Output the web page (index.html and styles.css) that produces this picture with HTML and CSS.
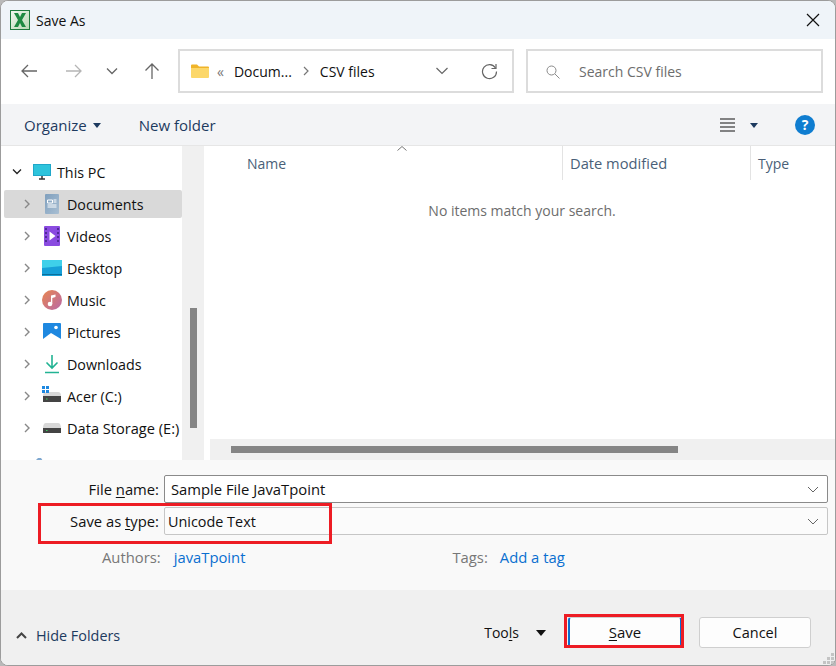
FILE: index.html
```html
<!DOCTYPE html>
<html>
<head>
  <title>Save As</title>
  <link rel="stylesheet" href="styles.css">
</head>
<body>
<div class="window">

  <div class="titlebar">
    <svg class="app-icon" width="20" height="20" viewBox="0 0 20 20">
      <defs>
        <linearGradient id="xl" x1="0" y1="0" x2="1" y2="1"><stop offset="0" stop-color="#f2f7f0"/><stop offset="1" stop-color="#b9d8b4"/></linearGradient>
        <linearGradient id="music" x1="0" y1="0" x2="1" y2="1"><stop offset="0" stop-color="#e8864f"/><stop offset="1" stop-color="#b968a8"/></linearGradient>
        <linearGradient id="docs" x1="0" y1="0" x2="1" y2="1"><stop offset="0" stop-color="#7f9fbd"/><stop offset="1" stop-color="#a9bfd3"/></linearGradient>
      </defs>
      <rect x="0.5" y="0.5" width="19" height="19" fill="url(#xl)" stroke="#1f7a3d"/>
      <path d="M4 3h4l2 4 2-4h4l-4 7 4 7h-4l-2-4-2 4H4l4-7z" fill="#1f8a42"/>
    </svg>
    <span class="title">Save As</span>
    <svg class="close" width="14" height="14" viewBox="0 0 14 14"><path d="M1 1l12 12M13 1L1 13" stroke="#111" stroke-width="1.2" fill="none"/></svg>
  </div>

  <div class="navbar">
    <svg class="nav-btn" width="18" height="16" viewBox="0 0 18 16"><path d="M17 8H2M8 2L2 8l6 6" stroke="#666" stroke-width="1.3" fill="none"/></svg>
    <svg class="nav-btn fwd" width="18" height="16" viewBox="0 0 18 16"><path d="M1 8h15M10 2l6 6-6 6" stroke="#b5b5b5" stroke-width="1.3" fill="none"/></svg>
    <svg class="nav-btn down" width="12" height="8" viewBox="0 0 12 8"><path d="M1 1.500l5 5 5-5" stroke="#666" stroke-width="1.3" fill="none"/></svg>
    <svg class="nav-btn up" width="16" height="18" viewBox="0 0 16 18"><path d="M8 17V2M1.500 8.500L8 2l6.500 6.500" stroke="#666" stroke-width="1.3" fill="none"/></svg>

    <div class="address">
      <svg width="18" height="14" viewBox="0 0 18 14"><path d="M0 1.500A1 1 0 0 1 1 .5h5l2 2h9a1 1 0 0 1 1 1V4H0z" fill="#f0b429"/><path d="M0 4h18v9a1 1 0 0 1-1 1H1a1 1 0 0 1-1-1z" fill="#fcd769"/></svg>
      <span class="crumb-more">«</span>
      <span class="crumb">Docum...</span>
      <svg class="crumb-sep" width="6" height="10" viewBox="0 0 6 10"><path d="M1 1l4 4-4 4" stroke="#777" stroke-width="1.2" fill="none"/></svg>
      <span class="crumb">CSV files</span>
      <svg class="addr-down" width="12" height="8" viewBox="0 0 12 8"><path d="M.5 1l5.500 5.500L11.500 1" stroke="#666" stroke-width="1.2" fill="none"/></svg>
      <svg class="refresh" width="17" height="17" viewBox="0 0 17 17"><path d="M14.500 5A7 7 0 1 0 15.500 8.500" stroke="#666" stroke-width="1.2" fill="none"/><path d="M10.500 5.500h4.500V1" stroke="#666" stroke-width="1.2" fill="none"/></svg>
    </div>

    <div class="search">
      <svg width="14" height="14" viewBox="0 0 14 14"><circle cx="5.500" cy="5.500" r="4.500" stroke="#8a8a8a" fill="none"/><path d="M9 9l4.500 4.500" stroke="#8a8a8a" fill="none"/></svg>
      <span>Search CSV files</span>
    </div>
  </div>

  <div class="toolbar">
    <span class="tool-label">Organize</span>
    <span class="caret"></span>
    <span class="tool-label new-folder">New folder</span>
    <svg class="view-icon" width="16" height="14" viewBox="0 0 16 14"><path d="M0 1h15M0 5h15M0 9h15M0 13h15" stroke="#111"/></svg>
    <span class="caret view-caret"></span>
    <svg class="help" width="20" height="20" viewBox="0 0 20 20">
      <circle cx="10" cy="10" r="10" fill="#0f7dd0"/>
      <text x="10" y="15" text-anchor="middle" class="help-mark">?</text>
    </svg>
  </div>

  <div class="content">
    <div class="tree">
      <div class="tree-row root">
        <svg width="10" height="6" viewBox="0 0 10 6"><path d="M1 .5l4 4 4-4" stroke="#222" stroke-width="1.300" fill="none"/></svg>
        <svg class="root-icon" width="18" height="16" viewBox="0 0 18 16"><rect width="18" height="12" fill="#1fa7c9"/><rect x="1" y="1" width="16" height="10" fill="#2ec4dc"/><path d="M6 15h6M9 12v3" stroke="#333" stroke-width="1.500"/></svg>
        <span>This PC</span>
      </div>
      <div class="tree-row selected">
        <svg class="chev" width="6" height="10" viewBox="0 0 6 10"><path d="M1 1l4 4-4 4" stroke="#888" stroke-width="1.400" fill="none"/></svg>
        <svg class="row-icon" width="20" height="20" viewBox="0 0 20 20"><rect x="3" width="14" height="20" rx="1" fill="url(#docs)"/><path d="M5.500 6h5v3h-5zM11.500 6h3M11.500 8h3M5.500 11h9M5.500 13h9" stroke="#fff" fill="none"/></svg>
        <span>Documents</span>
      </div>
      <div class="tree-row">
        <svg class="chev" width="6" height="10" viewBox="0 0 6 10"><path d="M1 1l4 4-4 4" stroke="#888" stroke-width="1.400" fill="none"/></svg>
        <svg class="row-icon" width="20" height="20" viewBox="0 0 20 20"><rect x="2" width="16" height="20" rx="1" fill="#8a4be0"/><path d="M7.500 5.500l6 4.500-6 4.500z" fill="#fff"/><path d="M4 2v16M16 2v16" stroke="#3d2080" stroke-width="1.500" stroke-dasharray="2 2"/></svg>
        <span>Videos</span>
      </div>
      <div class="tree-row">
        <svg class="chev" width="6" height="10" viewBox="0 0 6 10"><path d="M1 1l4 4-4 4" stroke="#888" stroke-width="1.400" fill="none"/></svg>
        <svg class="row-icon" width="20" height="20" viewBox="0 0 20 20"><rect y="2" width="20" height="16" fill="#17a0d8"/><path d="M0 2h20v6L0 10z" fill="#3fd0ea"/><path d="M0 16.500h20" stroke="#0a6f9c"/></svg>
        <span>Desktop</span>
      </div>
      <div class="tree-row">
        <svg class="chev" width="6" height="10" viewBox="0 0 6 10"><path d="M1 1l4 4-4 4" stroke="#888" stroke-width="1.400" fill="none"/></svg>
        <svg class="row-icon" width="20" height="20" viewBox="0 0 20 20"><circle cx="10" cy="10" r="10" fill="url(#music)"/><circle cx="8" cy="14" r="2.300" fill="#fff"/><path d="M9 14V5.500l4.500-1V7L10.300 8v6z" fill="#fff"/></svg>
        <span>Music</span>
      </div>
      <div class="tree-row">
        <svg class="chev" width="6" height="10" viewBox="0 0 6 10"><path d="M1 1l4 4-4 4" stroke="#888" stroke-width="1.400" fill="none"/></svg>
        <svg class="row-icon" width="20" height="20" viewBox="0 0 20 20"><rect x="1" y="1" width="18" height="18" rx="1" fill="#1e88e0"/><path d="M1 19v-2l8-6 10 6v2z" fill="#fff"/><circle cx="14" cy="5.500" r="1.800" fill="#fff"/></svg>
        <span>Pictures</span>
      </div>
      <div class="tree-row">
        <svg class="chev" width="6" height="10" viewBox="0 0 6 10"><path d="M1 1l4 4-4 4" stroke="#888" stroke-width="1.400" fill="none"/></svg>
        <svg class="row-icon" width="20" height="20" viewBox="0 0 20 20"><path d="M10 1v13M4.500 8.500L10 14l5.500-5.500M3 18.500h14" stroke="#22b393" stroke-width="1.600" fill="none"/></svg>
        <span>Downloads</span>
      </div>
      <div class="tree-row">
        <svg class="chev" width="6" height="10" viewBox="0 0 6 10"><path d="M1 1l4 4-4 4" stroke="#888" stroke-width="1.400" fill="none"/></svg>
        <svg class="row-icon" width="20" height="20" viewBox="0 0 20 20"><path d="M1 10c0-3 1-4 3-4h12c2 0 3 1 3 4z" fill="#d8d8d8"/><rect x="1" y="10" width="18" height="6" fill="#444"/><rect x="4" y="12.500" width="1.500" height="1" fill="#3fd060"/><path d="M0 0h3v3H0zM4 0h3v3H4zM0 4h3v3H0zM4 4h3v3H4z" fill="#1e88e0"/></svg>
        <span>Acer (C:)</span>
      </div>
      <div class="tree-row">
        <svg class="chev" width="6" height="10" viewBox="0 0 6 10"><path d="M1 1l4 4-4 4" stroke="#888" stroke-width="1.400" fill="none"/></svg>
        <svg class="row-icon" width="20" height="20" viewBox="0 0 20 20"><path d="M1 10c0-3 1-5 3-5h12c2 0 3 2 3 5z" fill="#d8d8d8"/><rect x="1" y="10" width="18" height="5" fill="#444"/><rect x="4" y="12" width="1.500" height="1" fill="#3fd060"/></svg>
        <span class="wide-label">Data Storage (E:)</span>
      </div>
      <svg class="network-peek" width="10" height="3" viewBox="0 0 10 3"><path d="M1 3l3-3h3l2 3z" fill="#7fa8d0"/></svg>
    </div>

    <div class="tree-scroll"><div class="tree-thumb"></div></div>

    <div class="files">
      <div class="file-head">
        <span class="col col-name">Name</span>
        <span class="col col-date">Date modified</span>
        <span class="col col-type">Type</span>
        <svg class="sort" width="10" height="5" viewBox="0 0 10 5"><path d="M.5 4.500L5 .5l4.500 4" stroke="#777" fill="none"/></svg>
      </div>
      <p class="empty">No items match your search.</p>
      <div class="hscroll"><div class="hthumb"></div></div>
    </div>
  </div>

  <div class="form">
    <div class="form-row">
      <label class="form-label">File <u>n</u>ame:</label>
      <div class="field active">
        <span>Sample File JavaTpoint</span>
        <svg width="12" height="7" viewBox="0 0 12 7"><path d="M1 1l5 5 5-5" stroke="#666" fill="none"/></svg>
      </div>
    </div>
    <div class="form-row">
      <label class="form-label">Save as <u>t</u>ype:</label>
      <div class="field plain">
        <span>Unicode Text</span>
        <svg width="12" height="7" viewBox="0 0 12 7"><path d="M1 1l5 5 5-5" stroke="#666" fill="none"/></svg>
      </div>
    </div>
    <div class="meta">
      <span class="meta-label">Authors:</span>
      <a class="meta-link authors">javaTpoint</a>
      <span class="meta-label tags">Tags:</span>
      <a class="meta-link add-tag">Add a tag</a>
    </div>
    <div class="mark mark-type"></div>
  </div>

  <div class="footer">
    <svg class="hide-chev" width="11" height="7" viewBox="0 0 11 7"><path d="M1 6l4.500-4.500L10 6" stroke="#444" stroke-width="2" fill="none"/></svg>
    <span class="hide-label">Hide Folders</span>
    <span class="tools">Too<u>l</u>s</span>
    <span class="tools-caret"></span>
    <button class="btn btn-save"><u>S</u>ave</button>
    <button class="btn btn-cancel">Cancel</button>
    <div class="mark mark-save"></div>
    <svg class="grip" width="12" height="12" viewBox="0 0 12 12"><path d="M8 0h3v3H8zM4 4h3v3H4zM8 4h3v3H8zM0 8h3v3H0zM4 8h3v3H4zM8 8h3v3H8z" fill="#c4c4c4"/></svg>
  </div>

</div>
</body>
</html>
```

FILE: styles.css
```css
* {
  box-sizing: border-box;
}
body {
  margin: 0;
  width: 836px;
  height: 666px;
  overflow: hidden;
  background: #b9b9b9;
  font-family: "Open Sans", "Noto Sans", sans-serif;
  font-size: 14px;
  color: #111;
}
svg {
  flex: none;
  display: block;
}
u {
  text-underline-offset: 2px;
}

.window {
  width: 836px;
  height: 666px;
  display: flex;
  flex-direction: column;
  background: #fff;
  border: 1px solid #9c9c9c;
  border-radius: 8px;
  overflow: hidden;
}

.titlebar {
  height: 38px;
  flex: none;
  display: flex;
  align-items: center;
  padding: 0 15px 0 9px;
  background: #eff4f9;
}
.title {
  margin-left: 6px;
}
.close {
  margin-left: auto;
}

.navbar {
  height: 65px;
  flex: none;
  display: flex;
  align-items: center;
  padding: 0 0 1px 19px;
  background: #fff;
}
.fwd {
  margin-left: 27px;
}
.down {
  margin-left: 23px;
}
.up {
  margin-left: 26px;
}
.address {
  width: 336px;
  height: 44px;
  margin-left: 18px;
  display: flex;
  align-items: center;
  padding-left: 11px;
  border: 2px solid #dcdcdc;
}
.crumb-more {
  margin: 0 10px 0 8px;
  color: #777;
}
.crumb-sep {
  margin: 0 11px;
}
.addr-down {
  margin-left: 61px;
}
.refresh {
  margin-left: 33px;
}
.search {
  width: 297px;
  height: 44px;
  margin-left: 12px;
  display: flex;
  align-items: center;
  gap: 19px;
  padding: 1px 0 0 18px;
  border: 2px solid #dcdcdc;
  color: #6d6d6d;
}

.toolbar {
  height: 42px;
  flex: none;
  display: flex;
  align-items: center;
  padding: 1px 0 0 23px;
  background: #f3f4f6;
  border-bottom: 1px solid #e6e6e6;
  font-size: 15px;
  color: #1d3a5f;
}
.caret {
  margin-left: 6px;
  border: 4px solid transparent;
  border-top: 5px solid #1d3a5f;
  border-bottom: 0;
}
.new-folder {
  margin-left: 38px;
}
.view-icon {
  margin-left: auto;
  position: relative;
  left: 1px;
}
.view-caret {
  margin-left: 15px;
}
.help {
  margin: 0 20px 0 37px;
}
.help-mark {
  font-size: 14px;
  font-weight: 700;
  fill: #fff;
}

.content {
  height: 314px;
  flex: none;
  display: flex;
  overflow: hidden;
}
.tree {
  width: 181px;
  flex: none;
  padding: 10px 0 0 3px;
  font-size: 14.3px;
}
.tree-row {
  height: 32px;
  display: flex;
  align-items: center;
  padding-left: 20px;
}
.tree-row.root {
  padding-left: 8px;
}
.root-icon {
  margin: 0 6px 0 11px;
}
.tree-row.selected {
  position: relative;
  z-index: 0;
}
.tree-row.selected::before {
  content: "";
  position: absolute;
  z-index: -1;
  left: 0;
  right: 0;
  top: 2px;
  bottom: 2px;
  background: #d9d9d9;
  border-radius: 2px;
}
.row-icon {
  margin: 0 5px 0 12px;
}
.tree-row span {
  white-space: nowrap;
}
.tree-row .wide-label {
  font-size: 14.6px;
}
.network-peek {
  margin: 14px 0 0 30px;
}
.tree-scroll {
  width: 22px;
  flex: none;
  padding: 162px 0 0 8px;
  background: #f0f0f0;
}
.tree-thumb {
  width: 7px;
  height: 120px;
  background: #858585;
}

.files {
  flex: 1;
  display: flex;
  flex-direction: column;
  padding-left: 3px;
  border-left: 2px solid #fff;
}
.file-head {
  position: relative;
  height: 34px;
  flex: none;
  display: flex;
  align-items: center;
  color: #4a5f78;
}
.col {
  height: 100%;
  display: flex;
  align-items: center;
}
.col-name {
  width: 353px;
  padding-left: 38px;
}
.col-date {
  width: 188px;
  padding-left: 7px;
  border-left: 1px solid #e3e3e3;
  font-size: 14.7px;
}
.col-type {
  padding-left: 7px;
  border-left: 1px solid #e3e3e3;
}
.sort {
  position: absolute;
  left: 188px;
  top: 0;
}
.empty {
  flex: 1;
  margin: 0;
  padding: 21px 0 0 0;
  text-align: center;
  color: #6d6d6d;
}
.hscroll {
  height: 21px;
  flex: none;
  margin-left: 1px;
  padding: 7px 0 0 21px;
  background: #f0f0f0;
}
.hthumb {
  width: 447px;
  height: 7px;
  background: #858585;
}

.form {
  position: relative;
  height: 130px;
  flex: none;
  padding-top: 15px;
  background: #f9f9f9;
  font-size: 14.8px;
}
.form-row {
  height: 28px;
  margin-bottom: 4px;
  display: flex;
  align-items: center;
}
.form-label {
  width: 158px;
  text-align: right;
  white-space: nowrap;
}
.field {
  width: 664px;
  height: 100%;
  margin-left: 5px;
  display: flex;
  align-items: center;
  justify-content: space-between;
  padding: 0 8px 0 6px;
  border-radius: 2px;
}
.field.active {
  background: #fff;
  border: 1px solid #8a8a8a;
}
.field.plain {
  padding-left: 3px;
  background: #fbfbfb;
  border: 1px solid #c6c6c6;
  font-size: 14.4px;
}
.meta {
  display: flex;
  align-items: center;
  margin-top: 10px;
  padding-left: 101px;
  height: 24px;
}
.meta-label {
  color: #777;
}
.meta-link {
  color: #0a6fd0;
}
.authors {
  margin-left: 13px;
}
.tags {
  margin-left: 207px;
}
.add-tag {
  margin-left: 12px;
}

.mark {
  position: absolute;
  border: 3px solid #ed1c24;
}
.mark-type {
  left: 37px;
  top: 43px;
  width: 294px;
  height: 41px;
}

.footer {
  position: relative;
  flex: 1;
  display: flex;
  align-items: center;
  padding: 10px 24px 0 15px;
  background: #f0f0f0;
}
.hide-chev {
  margin-top: 5px;
}
.hide-label {
  margin: 5px 0 0 9px;
  color: #1d3a5f;
  font-size: 14.4px;
}
.tools {
  margin-left: auto;
}
.tools-caret {
  margin: 0 22px 0 17px;
  border: 5px solid transparent;
  border-top: 6px solid #111;
  border-bottom: 0;
}
.btn {
  height: 31px;
  font: inherit;
  color: #111;
  background: #fdfdfd;
  border-radius: 3px;
}
.btn-save {
  width: 114px;
  padding-bottom: 3px;
  font-size: 15px;
  border: 1px solid #d0d0d0;
  border-left: 2px solid #0a6fd0;
  border-right: 2px solid #0a6fd0;
}
.btn-cancel {
  width: 112px;
  margin-left: 17px;
  font-size: 14.5px;
  border: 1px solid #cfcfcf;
}
.mark-save {
  left: 563px;
  top: 24px;
  width: 120px;
  height: 34px;
}
.grip {
  position: absolute;
  right: 0;
  bottom: 0;
}
```
